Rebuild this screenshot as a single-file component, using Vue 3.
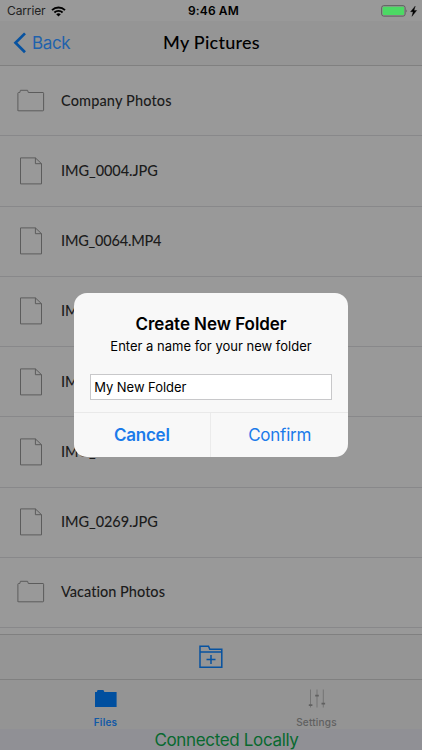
<script setup>
import { ref } from 'vue'

const files = [
  { name: 'Company Photos', type: 'folder', cls: 'company' },
  { name: 'IMG_0004.JPG', type: 'file' },
  { name: 'IMG_0064.MP4', type: 'file', cls: 'movie' },
  { name: 'IMG_0090.JPG', type: 'file' },
  { name: 'IMG_0101.JPG', type: 'file' },
  { name: 'IMG_0158.JPG', type: 'file' },
  { name: 'IMG_0269.JPG', type: 'file' },
  { name: 'Vacation Photos', type: 'folder', cls: 'vacation' },
]
const folderName = ref('My New Folder')
</script>

<template>
  <div class="screen">
    <header class="status">
      <div class="carrier">
        <span class="carrier-name">Carrier</span>
        <svg class="wifi" width="15" height="11" viewBox="0 0 15 11">
          <path d="M1 4.1a9.3 9.3 0 0 1 13 0M3.4 6.5a5.9 5.9 0 0 1 8.2 0" fill="none" stroke="#000" stroke-width="1.9" />
          <path d="M5.2 8.2a3.4 3.4 0 0 1 4.6 0L7.5 10.6z" />
        </svg>
      </div>
      <span class="clock">9:46 AM</span>
      <svg class="battery" width="38" height="13" viewBox="0 0 38 13">
        <rect x=".7" y=".7" width="23.4" height="10.4" rx="2" fill="none" stroke="#5c5c5c" />
        <rect x="1.7" y="1.7" width="21.4" height="8.4" rx="1" fill="#4cd964" />
        <path d="M25.3 4.2q1.6 1.6 0 3.4z" fill="#5c5c5c" />
        <path d="M34.2 1.2L29.6 6.7H32.2l-1.2 4.6L35.6 5.5h-2.7z" stroke="#000" stroke-width=".4" />
      </svg>
    </header>

    <nav class="navbar">
      <a class="back">
        <svg width="14" height="22" viewBox="0 0 14 22">
          <path d="M12 1.4L2.5 10.8L12 20.2" fill="none" stroke="#0752a0" stroke-width="2.7" />
        </svg>
        <span>Back</span>
      </a>
      <h1>My Pictures</h1>
    </nav>

    <main class="list">
      <div v-for="f in files" :key="f.name" class="row">
        <svg v-if="f.type === 'folder'" class="icon" width="28" height="28" viewBox="0 0 28 28">
          <path d="M.9 23.4V6.2q0-.7.7-.7h1.2l.6-2.2h7.2l.7 2.2h14.7q.6 0 .6.7v16.9q0 .7-.7.7H1.6q-.7 0-.7-.7z" fill="none" stroke="#5c5c5c" stroke-width="1" />
        </svg>
        <svg v-else class="icon" width="28" height="28" viewBox="0 0 28 28">
          <path d="M3.5.9H18.4l6.1 5.8v20.2H3.5zM18.4.9v5.8h6.1" fill="none" stroke="#5c5c5c" stroke-width="1" />
        </svg>
        <span class="name" :class="f.cls">{{ f.name }}</span>
      </div>
    </main>

    <div class="toolbar">
      <svg width="24" height="24" viewBox="0 0 24 24">
        <path d="M1 22.2V1.2h8.5l1.3 3H22.8v18zM1 7h21.8M12 10v9M7.5 14.5h9" fill="none" stroke="#0752a0" stroke-width="1.5" />
      </svg>
    </div>

    <footer class="tabs">
      <a class="tab active">
        <svg width="22" height="20" viewBox="0 0 22 20">
          <path d="M0 18V3h1.8l.8-1.9h5.8L9.4 3h12.2v15z" fill="#004f9f" />
        </svg>
        <span>Files</span>
      </a>
      <a class="tab">
        <svg width="18" height="20" viewBox="0 0 18 20">
          <path d="M2.5.5v18M9 .5v18M15.3.5v18" stroke="#747474" stroke-width="1" />
          <path d="M.8 16.2h3.6M7.2 6.7h3.6M13.5 14.6h3.6" stroke="#606060" stroke-width="1.8" />
        </svg>
        <span>Settings</span>
      </a>
    </footer>
    <div class="connection"><span>Connected Locally</span></div>

    <section class="dialog" role="dialog">
      <div class="dialog-body">
        <h2>Create New Folder</h2>
        <p>Enter a name for your new folder</p>
        <input v-model="folderName" type="text">
      </div>
      <div class="actions">
        <button class="cancel"><span>Cancel</span></button>
        <button class="confirm"><span>Confirm</span></button>
      </div>
    </section>
  </div>
</template>

<style>
body { margin: 0; overflow: hidden; }
</style>

<style scoped>
* { box-sizing: border-box; }
.screen { position: relative; width: 422px; height: 750px; overflow: hidden; display: flex; flex-direction: column; background: #999; font-family: Inter, "Liberation Sans", sans-serif; color: #000; }
.status { flex: none; height: 21px; display: grid; grid-template-columns: 1fr auto 1fr; align-items: center; padding: 1px 3px 0 7px; background: #999; }
.carrier { display: flex; align-items: center; gap: 5px; font-size: 12px; line-height: 20px; color: #222; }
.carrier-name { letter-spacing: -.12px; }
.clock { font-size: 12px; line-height: 20px; font-weight: 600; letter-spacing: .12px; padding-left: 1px; }
.battery { justify-self: end; }
.navbar { flex: none; height: 45px; display: grid; grid-template-columns: 1fr auto 1fr; align-items: center; background: #959595; border-bottom: 1px solid #808080; }
.back { display: flex; align-items: center; gap: 5px; padding-left: 13px; font-size: 17px; color: #1f62ac; }
.back span { letter-spacing: -.35px; }
h1 { margin: 0; font: 500 18px/24px Lato, sans-serif; letter-spacing: .25px; padding: 0 0 2px 1px; }
.list { flex: none; height: 568px; overflow: hidden; }
.row { height: 70.25px; display: flex; align-items: center; gap: 16px; padding-left: 17px; border-bottom: 1px solid #88888a; }
.icon { flex: none; }
.name { font: 500 14.5px/20px Lato, sans-serif; letter-spacing: -.06px; color: #1c1c1c; }
.name.movie { letter-spacing: -.2px; }
.name.company { letter-spacing: .14px; }
.name.vacation { letter-spacing: .02px; }
.toolbar { flex: none; height: 46px; display: flex; align-items: center; justify-content: center; background: #959595; border-top: 1px solid #808080; border-bottom: 1px solid #808080; }
.tabs { flex: none; height: 49px; display: grid; grid-template-columns: 1fr 1fr; background: #949494; }
.tab { display: flex; flex-direction: column; align-items: center; padding-top: 9px; color: #606060; font-size: 10px; font-weight: 500; line-height: 12px; gap: 7px; }
.tab span { letter-spacing: .2px; }
.tab.active { color: #1259a6; font-weight: 600; }
.connection { flex: 1; background: #909095; display: flex; justify-content: center; padding-left: 31px; color: #08692f; font-size: 17px; line-height: 22px; }
.connection span { letter-spacing: -.34px; white-space: nowrap; }
.dialog { position: absolute; left: 73.7px; top: 293px; width: 274.6px; height: 164px; border-radius: 13px; overflow: hidden; background: #f8f8f8; display: flex; flex-direction: column; }
.dialog-body { height: 119px; padding: 21px 16px 0; text-align: center; }
h2 { margin: 0; font-size: 17px; line-height: 20px; font-weight: 600; letter-spacing: -.05px; white-space: nowrap; }
p { margin: 3px 0 0; font-size: 13px; line-height: 18px; letter-spacing: 0; white-space: nowrap; }
input { display: block; margin: 19px 0 0; width: 242.6px; height: 26px; padding: 0 3.5px; border: 1px solid #c8c8ca; border-radius: 0; background: #fff; color: #000; font: 400 13px/24px Inter, sans-serif; letter-spacing: -.04px; outline: none; }
.actions { flex: 1; display: grid; grid-template-columns: 1fr 1fr; border-top: 1px solid #e9e9e9; }
button { padding: 0 0 1px; border: 0; background: transparent; color: #1b7bea; font: 400 17px/22px Inter, sans-serif; letter-spacing: -.25px; }
.cancel { font-weight: 600; border-right: 1px solid #ebebeb; }
</style>
